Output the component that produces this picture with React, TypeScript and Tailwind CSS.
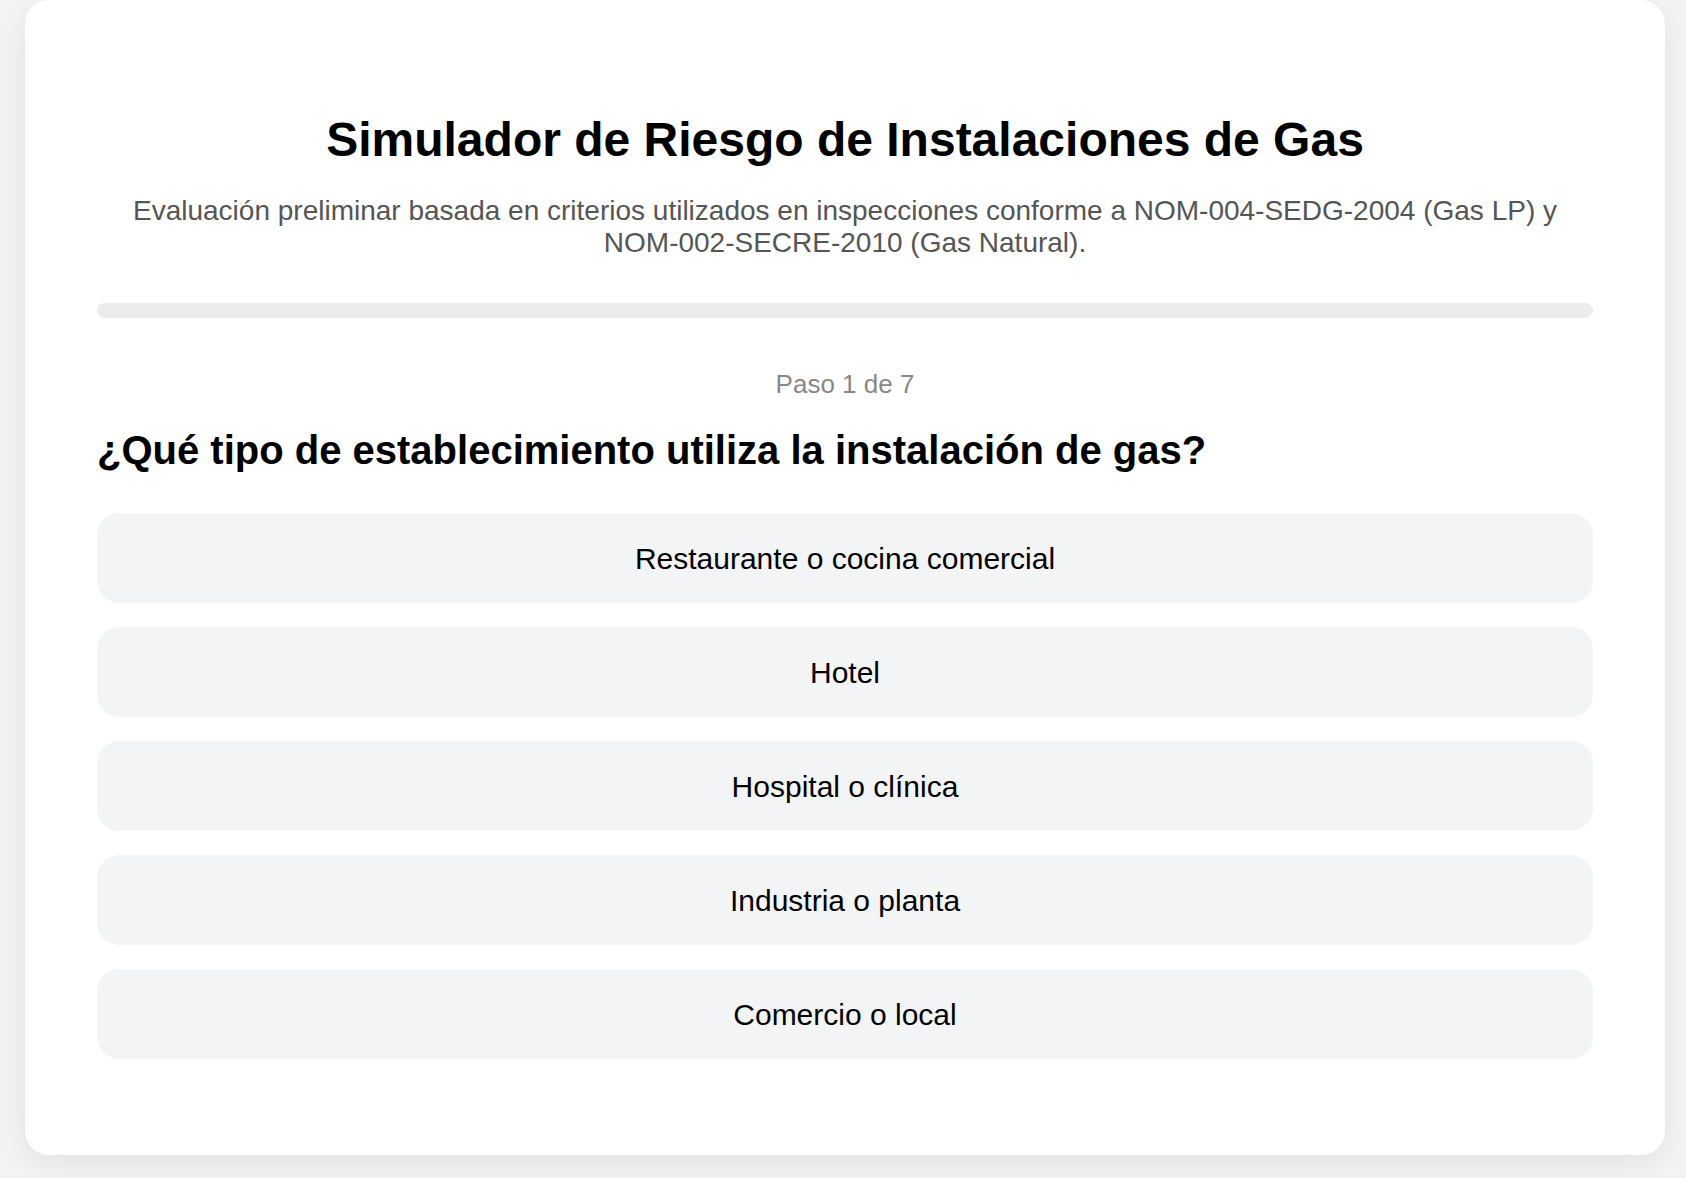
import { useState } from "react";

const OPTIONS = [
  "Restaurante o cocina comercial",
  "Hotel",
  "Hospital o clínica",
  "Industria o planta",
  "Comercio o local",
];

const TOTAL_STEPS = 7;

export default function App() {
  const [step] = useState(1);
  const [selected, setSelected] = useState<string | null>(null);

  return (
    <div
      className="min-h-screen bg-[#f3f3f3] pl-[25px] pr-[21px] pb-[23px]"
      style={{ fontFamily: '"Liberation Sans", Arial, sans-serif' }}
    >
      <div className="rounded-[24px] bg-white px-[72px] pt-[112px] pb-[96px] shadow-[0_8px_30px_rgba(0,0,0,0.07)]">
        <h1 className="text-center text-[48px] font-bold leading-[56px] text-black">
          Simulador de Riesgo de Instalaciones de Gas
        </h1>
        <p className="mt-[27px] text-center text-[28px] leading-[32px] text-[#555555]">
          Evaluación preliminar basada en criterios utilizados en inspecciones
          conforme a NOM-004-SEDG-2004 (Gas LP) y NOM-002-SECRE-2010 (Gas
          Natural).
        </p>

        {/* progress */}
        <div className="mt-[44px] h-[15px] w-full overflow-hidden rounded-full bg-[#ececec]">
          <div className="h-full w-0 rounded-full bg-[#2563eb]" />
        </div>

        <p className="mt-[48px] text-center text-[26px] leading-[36px] text-[#888888]">
          Paso {step} de {TOTAL_STEPS}
        </p>

        <h2 className="mt-[24px] text-[40px] font-bold leading-[48px] text-black">
          ¿Qué tipo de establecimiento utiliza la instalación de gas?
        </h2>

        <div className="mt-[39px] flex flex-col gap-[24px]">
          {OPTIONS.map((opt) => (
            <button
              key={opt}
              onClick={() => setSelected(opt)}
              className={`flex h-[90px] w-full items-center justify-center rounded-[22px] text-[30px] text-black ${
                selected === opt ? "bg-[#e5e7eb]" : "bg-[#f3f4f6]"
              }`}
            >
              {opt}
            </button>
          ))}
        </div>
      </div>
    </div>
  );
}
